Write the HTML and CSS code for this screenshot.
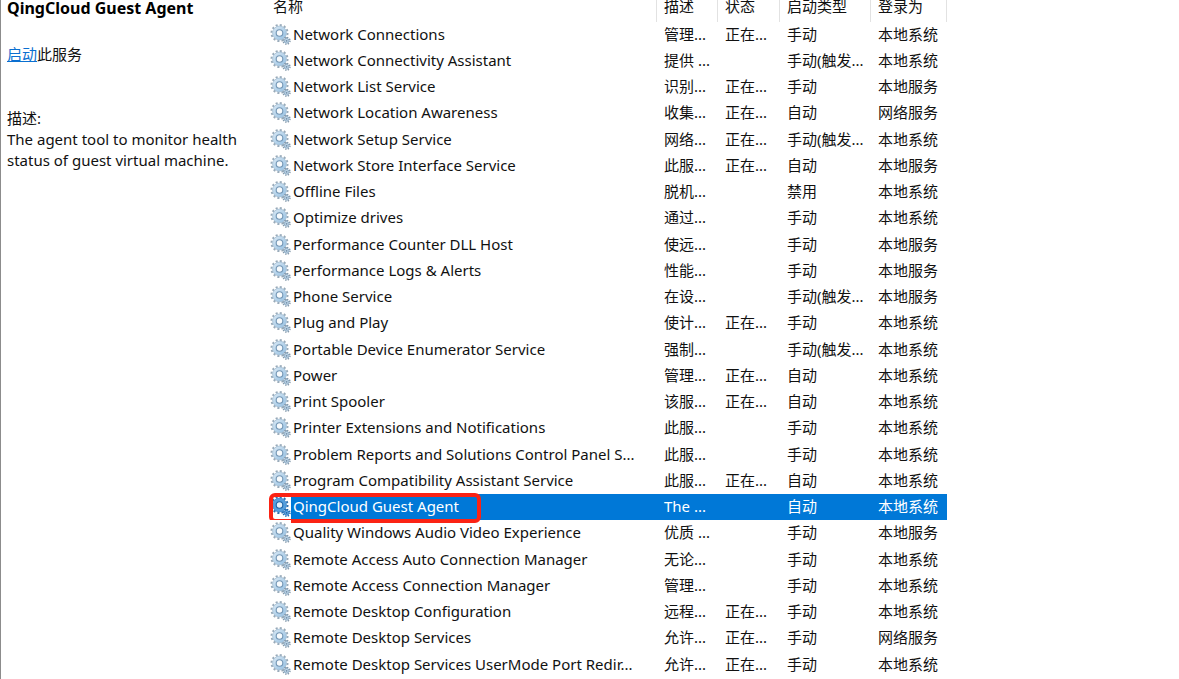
FILE: index.html
```html
<!DOCTYPE html>
<html lang="zh-CN">
<head>
<meta charset="utf-8">
<meta name="viewport" content="width=device-width, initial-scale=1">
<title>服务</title>
<link rel="stylesheet" href="styles.css">
</head>
<body>
<svg class="sprite" aria-hidden="true">
  <defs>
    <linearGradient id="metal" x1="0" y1="0" x2="1" y2="1">
      <stop offset="0" stop-color="#dbe9f4"/>
      <stop offset="1" stop-color="#93bfe2"/>
    </linearGradient>
    <symbol id="gear" viewBox="0 0 22 22">
      <circle cx="10.5" cy="10" r="8" fill="none" stroke="#98aab9" stroke-width="2" stroke-dasharray="2.09 2.1"/>
      <circle cx="10.5" cy="10" r="6.9" fill="url(#metal)" stroke="#a3bed3" stroke-width="0.8"/>
      <circle cx="10.5" cy="10" r="3.3" fill="#f8fbfd" stroke="#7396b5" stroke-width="1.1"/>
      <circle cx="17.6" cy="17.8" r="3.4" fill="none" stroke="#8499ab" stroke-width="1.5" stroke-dasharray="1.33 1.34"/>
      <circle cx="17.6" cy="17.8" r="2.4" fill="#bcd3e5" stroke="#8fadc6" stroke-width="1"/>
      <circle cx="17.6" cy="17.8" r="0.9" fill="#7591aa"/>
    </symbol>
    <symbol id="gear-selected" viewBox="0 0 22 22">
      <circle cx="10.5" cy="10" r="8" fill="none" stroke="#2f6fae" stroke-width="2" stroke-dasharray="2.09 2.1"/>
      <circle cx="10.5" cy="10" r="6.9" fill="#559fdd" stroke="#3f88cb" stroke-width="0.8"/>
      <circle cx="10.5" cy="10" r="3.3" fill="#e4f1fb" stroke="#1f65a8" stroke-width="1.1"/>
      <circle cx="17.6" cy="17.8" r="3.4" fill="none" stroke="#1f6cb5" stroke-width="1.5" stroke-dasharray="1.33 1.34"/>
      <circle cx="17.6" cy="17.8" r="2.4" fill="#62a6df" stroke="#2f7cc4" stroke-width="1"/>
      <circle cx="17.6" cy="17.8" r="0.9" fill="#1f65a8"/>
    </symbol>
  </defs>
</svg>
<div class="layout">
  <aside class="details">
    <h1 class="title">QingCloud Guest Agent</h1>
    <p class="action"><a class="link" href="#start">启动</a>此服务</p>
    <p class="label">描述:</p>
    <p class="description">The agent tool to monitor health status of guest virtual machine.</p>
  </aside>
  <main class="list">
    <table class="services">
      <colgroup><col><col class="col-description"><col class="col-status"><col class="col-type"><col class="col-account"></colgroup>
      <thead><tr><th>名称</th><th>描述</th><th>状态</th><th>启动类型</th><th>登录为</th></tr></thead>
      <tbody>
        <tr><td><div class="name"><svg class="icon"><use href="#gear"/></svg>Network Connections</div></td><td>管理...</td><td>正在...</td><td>手动</td><td>本地系统</td></tr>
        <tr><td><div class="name"><svg class="icon"><use href="#gear"/></svg>Network Connectivity Assistant</div></td><td>提供 ...</td><td></td><td>手动(触发...</td><td>本地系统</td></tr>
        <tr><td><div class="name"><svg class="icon"><use href="#gear"/></svg>Network List Service</div></td><td>识别...</td><td>正在...</td><td>手动</td><td>本地服务</td></tr>
        <tr><td><div class="name"><svg class="icon"><use href="#gear"/></svg>Network Location Awareness</div></td><td>收集...</td><td>正在...</td><td>自动</td><td>网络服务</td></tr>
        <tr><td><div class="name"><svg class="icon"><use href="#gear"/></svg>Network Setup Service</div></td><td>网络...</td><td>正在...</td><td>手动(触发...</td><td>本地系统</td></tr>
        <tr><td><div class="name"><svg class="icon"><use href="#gear"/></svg>Network Store Interface Service</div></td><td>此服...</td><td>正在...</td><td>自动</td><td>本地服务</td></tr>
        <tr><td><div class="name"><svg class="icon"><use href="#gear"/></svg>Offline Files</div></td><td>脱机...</td><td></td><td>禁用</td><td>本地系统</td></tr>
        <tr><td><div class="name"><svg class="icon"><use href="#gear"/></svg>Optimize drives</div></td><td>通过...</td><td></td><td>手动</td><td>本地系统</td></tr>
        <tr><td><div class="name"><svg class="icon"><use href="#gear"/></svg>Performance Counter DLL Host</div></td><td>使远...</td><td></td><td>手动</td><td>本地服务</td></tr>
        <tr><td><div class="name"><svg class="icon"><use href="#gear"/></svg>Performance Logs &amp; Alerts</div></td><td>性能...</td><td></td><td>手动</td><td>本地服务</td></tr>
        <tr><td><div class="name"><svg class="icon"><use href="#gear"/></svg>Phone Service</div></td><td>在设...</td><td></td><td>手动(触发...</td><td>本地服务</td></tr>
        <tr><td><div class="name"><svg class="icon"><use href="#gear"/></svg>Plug and Play</div></td><td>使计...</td><td>正在...</td><td>手动</td><td>本地系统</td></tr>
        <tr><td><div class="name"><svg class="icon"><use href="#gear"/></svg>Portable Device Enumerator Service</div></td><td>强制...</td><td></td><td>手动(触发...</td><td>本地系统</td></tr>
        <tr><td><div class="name"><svg class="icon"><use href="#gear"/></svg>Power</div></td><td>管理...</td><td>正在...</td><td>自动</td><td>本地系统</td></tr>
        <tr><td><div class="name"><svg class="icon"><use href="#gear"/></svg>Print Spooler</div></td><td>该服...</td><td>正在...</td><td>自动</td><td>本地系统</td></tr>
        <tr><td><div class="name"><svg class="icon"><use href="#gear"/></svg>Printer Extensions and Notifications</div></td><td>此服...</td><td></td><td>手动</td><td>本地系统</td></tr>
        <tr><td><div class="name"><svg class="icon"><use href="#gear"/></svg>Problem Reports and Solutions Control Panel S...</div></td><td>此服...</td><td></td><td>手动</td><td>本地系统</td></tr>
        <tr><td><div class="name"><svg class="icon"><use href="#gear"/></svg>Program Compatibility Assistant Service</div></td><td>此服...</td><td>正在...</td><td>自动</td><td>本地系统</td></tr>
        <tr class="selected"><td><div class="name"><svg class="icon"><use href="#gear-selected"/></svg>QingCloud Guest Agent<span class="marker"></span></div></td><td>The ...</td><td></td><td>自动</td><td>本地系统</td></tr>
        <tr><td><div class="name"><svg class="icon"><use href="#gear"/></svg>Quality Windows Audio Video Experience</div></td><td>优质 ...</td><td></td><td>手动</td><td>本地服务</td></tr>
        <tr><td><div class="name"><svg class="icon"><use href="#gear"/></svg>Remote Access Auto Connection Manager</div></td><td>无论...</td><td></td><td>手动</td><td>本地系统</td></tr>
        <tr><td><div class="name"><svg class="icon"><use href="#gear"/></svg>Remote Access Connection Manager</div></td><td>管理...</td><td></td><td>手动</td><td>本地系统</td></tr>
        <tr><td><div class="name"><svg class="icon"><use href="#gear"/></svg>Remote Desktop Configuration</div></td><td>远程...</td><td>正在...</td><td>手动</td><td>本地系统</td></tr>
        <tr><td><div class="name"><svg class="icon"><use href="#gear"/></svg>Remote Desktop Services</div></td><td>允许...</td><td>正在...</td><td>手动</td><td>网络服务</td></tr>
        <tr><td><div class="name"><svg class="icon"><use href="#gear"/></svg>Remote Desktop Services UserMode Port Redir...</div></td><td>允许...</td><td>正在...</td><td>手动</td><td>本地系统</td></tr>
      </tbody>
    </table>
  </main>
</div>
</body>
</html>
```
FILE: styles.css
```css
* { box-sizing: border-box; }

body {
  margin: 0;
  background: #fff;
  color: #111;
  font: 15px/24px "Noto Sans", "Noto Sans CJK SC", sans-serif;
}

.sprite {
  position: absolute;
  width: 0;
  height: 0;
}

.layout {
  display: flex;
  min-height: 100vh;
  border-left: 1px solid #8c8c8c;
}

.details {
  flex: none;
  width: 268px;
  padding: 0 16px 0 6px;
  line-height: 21px;
}

.title {
  margin: 0 0 28px;
  font-size: 16px;
  line-height: 16px;
  color: #000;
}

.action { margin: 0 0 43px; }

.link { color: #0a6fd0; }

.label,
.description { margin: 0; }

.list {
  flex: 1;
  max-width: 678px;
}

.services {
  width: 100%;
  table-layout: fixed;
  border-collapse: separate;
  border-spacing: 0;
}

.col-description { width: 61px; }
.col-status { width: 62px; }
.col-type { width: 91px; }
.col-account { width: 77px; }

.services th {
  height: 22px;
  padding: 0 0 0 7px;
  border-left: 1px solid #e2e2e2;
  font-weight: 400;
  line-height: 12px;
  text-align: left;
  vertical-align: top;
}

.services th:first-child {
  padding-left: 4px;
  border-left: 0;
}

.services th:last-child { border-right: 1px solid #e2e2e2; }

.services td {
  height: 26px;
  padding: 0 0 0 8px;
  vertical-align: top;
  white-space: nowrap;
}

.services tr:nth-child(4n) td { height: 27px; }

.services td:first-child { padding-left: 0; }

.name {
  position: relative;
  display: flex;
  gap: 2px;
}

.icon {
  flex: none;
  width: 22px;
  height: 26px;
  padding: 1px 0 3px 0;
  background: #fff;
}

.selected {
  background: #0078d7;
  color: #fff;
}

.marker {
  position: absolute;
  top: -1px;
  left: 0;
  width: 212px;
  height: 30px;
  border: 4px solid #fb2314;
  border-radius: 6px;
}
```
